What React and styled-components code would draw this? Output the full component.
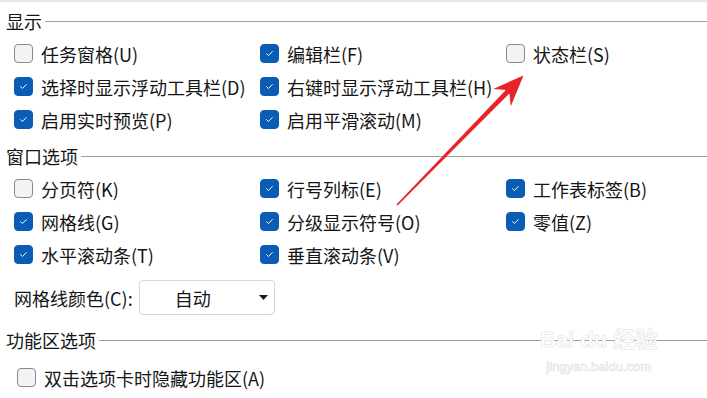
import React from "react";
import styled, { createGlobalStyle } from "styled-components";

const Global = createGlobalStyle`
  html, body { margin: 0; padding: 0; background: #ffffff; }
  body { font-family: "Noto Sans CJK SC", "Noto Sans", sans-serif; color: #151515; }
`;

const Page = styled.div`
  position: relative;
  width: 707px;
  height: 398px;
  overflow: hidden;
  border-top: 2px solid #e8e8e8;
  box-sizing: border-box;
  background: #fff;
`;

const SectionHeader = styled.div`
  display: flex;
  align-items: center;
  height: 32px;
  margin-top: ${(p) => p.$mt}px;
  padding-left: 6px;
  font-size: 18px;
  line-height: 1;
  white-space: nowrap;
`;

const HeaderLine = styled.div`
  flex: 1;
  height: 1px;
  margin-left: 3px;
  background: #a0a0a0;
`;

const Grid = styled.div`
  display: grid;
  grid-template-columns: 246px 246px 1fr;
  grid-auto-rows: 33px;
  padding-left: ${(p) => p.$pl || 14}px;
  margin-top: ${(p) => p.$mt || 0}px;
`;

const Option = styled.label`
  display: flex;
  align-items: center;
  gap: 8px;
  font-size: 18px;
  line-height: 1;
  white-space: nowrap;
  grid-column: ${(p) => p.$col};
`;

const Box = styled.span`
  flex: none;
  width: 19px;
  height: 19px;
  box-sizing: border-box;
  border-radius: 4px;
  display: flex;
  align-items: center;
  justify-content: center;
  background: ${(p) => (p.$on ? "#0b5cb5" : "#f3f3f3")};
  border: 1px solid ${(p) => (p.$on ? "#0b5cb5" : "#8a8a8a")};
`;

const ColorRow = styled.div`
  display: flex;
  align-items: center;
  height: 35px;
  margin-top: 9px;
  padding-left: 14px;
  font-size: 18px;
  line-height: 1;
  gap: 6px;
`;

const Select = styled.div`
  display: flex;
  align-items: center;
  width: 136px;
  height: 35px;
  box-sizing: border-box;
  border: 1px solid #d6d6d6;
  border-radius: 4px;
  background: #fff;
`;

const SelectText = styled.span`
  flex: 1;
  text-align: center;
`;

const Caret = styled.span`
  width: 28px;
  display: flex;
  padding-left: 13px;
  box-sizing: border-box;
`;

const Overlay = styled.svg`
  position: absolute;
  left: 0;
  top: 0;
  pointer-events: none;
`;

const Watermark = styled.div`
  position: absolute;
  left: 540px;
  top: 326px;
  display: flex;
  flex-direction: column;
  align-items: center;
  white-space: nowrap;
  color: #ffffff;
  -webkit-text-stroke: 0.6px #e2e2e2;
  font-family: "Liberation Sans", "Noto Sans CJK SC", sans-serif;
  pointer-events: none;
`;

const WmTop = styled.div`
  font-size: 22px;
  font-weight: bold;
  line-height: 1.1;
`;

const WmBottom = styled.div`
  font-size: 13px;
  line-height: 1;
  margin-top: 8px;
`;

function Check({ on }) {
  return (
    <Box $on={on}>
      {on && (
        <svg width="19" height="19" viewBox="0 0 19 19">
          <path d="M6.3 9.8 L8.3 11.7 L12.6 7.4" fill="none" stroke="#fff" strokeWidth="1.1" strokeLinecap="round" strokeLinejoin="round" />
        </svg>
      )}
    </Box>
  );
}

function Opt({ on, children, col }) {
  return (
    <Option $col={col}>
      <Check on={on} />
      <span>{children}</span>
    </Option>
  );
}

export default function App() {
  return (
    <>
      <Global />
      <Page>
        <SectionHeader $mt={3}>
          显示<HeaderLine />
        </SectionHeader>
        <Grid>
          <Opt on={false}>任务窗格(U)</Opt>
          <Opt on>编辑栏(F)</Opt>
          <Opt on={false}>状态栏(S)</Opt>
          <Opt on>选择时显示浮动工具栏(D)</Opt>
          <Opt on col="2 / 4">右键时显示浮动工具栏(H)</Opt>
          <Opt on>启用实时预览(P)</Opt>
          <Opt on col="2 / 4">启用平滑滚动(M)</Opt>
        </Grid>

        <SectionHeader $mt={4}>
          窗口选项<HeaderLine />
        </SectionHeader>
        <Grid>
          <Opt on={false}>分页符(K)</Opt>
          <Opt on>行号列标(E)</Opt>
          <Opt on>工作表标签(B)</Opt>
          <Opt on>网格线(G)</Opt>
          <Opt on>分级显示符号(O)</Opt>
          <Opt on>零值(Z)</Opt>
          <Opt on>水平滚动条(T)</Opt>
          <Opt on col="2 / 4">垂直滚动条(V)</Opt>
        </Grid>
        <ColorRow>
          <span>网格线颜色(C):</span>
          <Select>
            <SelectText>自动</SelectText>
            <Caret>
              <svg width="9" height="5" viewBox="0 0 9 5">
                <path d="M0 0 H9 L4.5 5 Z" fill="#1b1b1b" />
              </svg>
            </Caret>
          </Select>
        </ColorRow>

        <SectionHeader $mt={9}>
          功能区选项<HeaderLine />
        </SectionHeader>
        <Grid $pl={17} $mt={5}>
          <Opt on={false} col="1 / 4">双击选项卡时隐藏功能区(A)</Opt>
        </Grid>

        <Watermark>
          <WmTop>Bai du 经验</WmTop>
          <WmBottom>jingyan.baidu.com</WmBottom>
        </Watermark>

        <Overlay width="707" height="398" viewBox="0 0 707 398">
          <polygon
            points="397.6,203.6 509.4,91.5 510.8,104.2 523.5,73.5 493.2,86.9 505.8,88 396.4,202.4"
            fill="#e8242b"
          />
        </Overlay>
      </Page>
    </>
  );
}
